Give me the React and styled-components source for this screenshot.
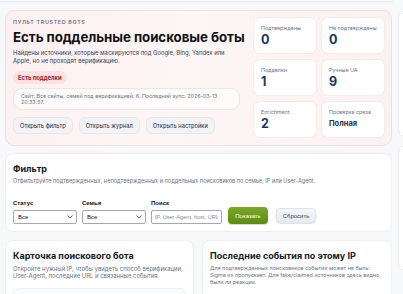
import styled, { createGlobalStyle } from "styled-components";

const GlobalStyle = createGlobalStyle`
  html, body {
    margin: 0;
    padding: 0;
    background: #f7f8fa;
    font-family: Inter, "Noto Sans", sans-serif;
    color: #111827;
    overflow: hidden;
  }
`;

const Page = styled.div`
  display: grid;
  grid-template-columns: 387px 120px;
  column-gap: 6px;
  padding: 0 0 0 5px;
  width: 520px;
`;

const PrevEdge = styled.div`
  grid-column: 1 / 3;
  height: 1px;
  margin-left: -5px;
  width: 393px;
  border-bottom: 1px solid #e9ebef;
  margin-bottom: 8px;
`;

const Main = styled.div`
  display: flex;
  flex-direction: column;
  gap: 7px;
`;

const Side = styled.div`
  display: flex;
  flex-direction: column;
  gap: 8px;
`;

const SideCard = styled.div`
  height: ${(p) => p.$h}px;
  background: #fff;
  border: 1px solid #eceef2;
  border-radius: 8px;
`;

const Hero = styled.section`
  display: grid;
  grid-template-columns: minmax(0, 1fr) 130px;
  gap: 14px;
  padding: 7px;
  height: 136px;
  box-sizing: border-box;
  border: 1px solid #f3dede;
  border-radius: 9px;
  background: linear-gradient(100deg, #fdf0f0 0%, #fdf6f5 45%, #fbf1f0 100%);
`;

const HeroLeft = styled.div`
  display: flex;
  flex-direction: column;
  padding-top: 1px;
`;

const Eyebrow = styled.div`
  font-size: 5.3px;
  line-height: 7px;
  font-weight: 600;
  letter-spacing: 0.7px;
  color: #6b7280;
  text-transform: uppercase;
`;

const HeroTitle = styled.h1`
  margin: 4px 0 0;
  font-size: 13.3px;
  font-weight: 700;
  letter-spacing: -0.05px;
  line-height: 15px;
  white-space: nowrap;
  color: #0f1115;
`;

const HeroText = styled.p`
  margin: 4px 0 0;
  font-size: 5.9px;
  line-height: 7.5px;
  color: #374151;
`;

const Badge = styled.span`
  align-self: flex-start;
  margin-top: 7px;
  padding: 3px 5px;
  border-radius: 7px;
  background: #fbe1e4;
  color: #9b1c2c;
  font-size: 5.8px;
  line-height: 7px;
  font-weight: 700;
`;

const InfoBox = styled.div`
  margin-top: 4px;
  padding: 4px 7px;
  border: 1px solid #efe3e3;
  border-radius: 9px;
  background: rgba(255, 255, 255, 0.6);
  font-size: 5.3px;
  line-height: 6px;
  color: #6b7280;
`;

const Actions = styled.div`
  display: flex;
  gap: 6px;
  margin-top: 7px;
`;

const GhostButton = styled.button`
  padding: 0 6px;
  height: 17px;
  border: 1px solid #e5e7eb;
  border-radius: 6px;
  background: #f1f3f6;
  font-family: inherit;
  font-size: 5.75px;
  color: #1f2937;
`;

const Stats = styled.div`
  display: grid;
  grid-template-columns: 1fr 1fr;
  grid-auto-rows: 35px;
  gap: 7px 6px;
`;

const Tile = styled.div`
  background: #fff;
  border-radius: 6px;
  padding: 7px 7px 0;
  box-shadow: 0 0 0 1px #f6eaea;
`;

const TileLabel = styled.div`
  font-size: 5.3px;
  line-height: 7px;
  color: #6b7280;
  white-space: nowrap;
`;

const TileValue = styled.div`
  margin-top: ${(p) => (p.$small ? 3 : 1)}px;
  font-size: ${(p) => (p.$small ? 7.5 : 12.5)}px;
  line-height: ${(p) => (p.$small ? 9 : 13)}px;
  font-weight: 700;
  color: #17365d;
`;

const Card = styled.section`
  background: #fff;
  border: 1px solid #eceef2;
  border-radius: 8px;
  padding: 9px 7px 7px;
  box-sizing: border-box;
  min-width: 0;
`;

const CardTitle = styled.h2`
  margin: 0;
  font-size: 9px;
  line-height: 11px;
  font-weight: 700;
  color: #111827;
`;

const CardText = styled.p`
  margin: 4px 0 0;
  font-size: ${(p) => p.$size || 5.6}px;
  line-height: 7px;
  color: #6b7280;
`;

const FilterRow = styled.div`
  display: flex;
  align-items: flex-end;
  gap: 5px;
  margin-top: 15px;
`;

const Field = styled.label`
  display: flex;
  flex-direction: column;
  gap: 3px;
  width: ${(p) => p.$w}px;
`;

const FieldLabel = styled.span`
  font-family: "Liberation Sans", Arial, sans-serif;
  font-size: 6px;
  line-height: 7px;
  font-weight: 700;
  color: #111;
`;

const SelectBox = styled.div`
  display: flex;
  align-items: center;
  justify-content: space-between;
  height: 12px;
  padding: 0 3px 0 4px;
  border: 1px solid #a6a8ad;
  border-radius: 2px;
  font-family: "Liberation Sans", Arial, sans-serif;
  font-size: 6px;
  color: #111;
  background: #fff;
`;

const SearchInput = styled.input`
  height: 14px;
  box-sizing: border-box;
  padding: 0 3px;
  border: 1px solid #a6a8ad;
  border-radius: 2px;
  font-family: "Liberation Sans", Arial, sans-serif;
  font-size: 5.6px;
  outline: none;
  &::placeholder {
    color: #8a8d93;
  }
`;

const PrimaryButton = styled.button`
  height: 17px;
  width: 40px;
  padding: 0;
  margin-left: 1px;
  border: none;
  border-radius: 4px;
  background: linear-gradient(#7aa82a, #5e8c10);
  color: #fff;
  font-family: "Liberation Sans", Arial, sans-serif;
  font-size: 6px;
  box-shadow: 0 1px 1px rgba(0, 0, 0, 0.15);
`;

const SecondaryButton = styled.button`
  height: 16px;
  width: 40px;
  padding: 0;
  margin-left: 3px;
  border: 1px solid #dde3ea;
  border-radius: 4px;
  background: linear-gradient(#f4f7fa, #e4eaf0);
  color: #2c4460;
  font-family: "Liberation Sans", Arial, sans-serif;
  font-size: 6px;
`;

const Columns = styled.div`
  display: grid;
  grid-template-columns: 189px 190px;
  gap: 8px;
  margin-top: 1px;
`;

const InnerBox = styled.div`
  margin-top: 9px;
  height: 20px;
  border: 1px solid #eef0f3;
  border-radius: 6px;
  background: #fafbfc;
`;

function Chevron() {
  return (
    <svg width="6" height="4" viewBox="0 0 6 4">
      <path d="M0.5 0.5 L3 3 L5.5 0.5" fill="none" stroke="#333" strokeWidth="0.8" />
    </svg>
  );
}

const stats = [
  { label: "Подтверждены", value: "0" },
  { label: "Не подтверждены", value: "0" },
  { label: "Подделки", value: "1" },
  { label: "Ручные UA", value: "9" },
  { label: "Enrichment", value: "2" },
  { label: "Проверка среза", value: "Полная", small: true },
];

export default function App() {
  return (
    <>
      <GlobalStyle />
      <Page>
        <PrevEdge />
        <Main>
          <Hero>
            <HeroLeft>
              <Eyebrow>Пульт Trusted Bots</Eyebrow>
              <HeroTitle>Есть поддельные поисковые боты</HeroTitle>
              <HeroText>
                Найдены источники, которые маскируются под Google, Bing, Yandex или
                Apple, но не проходят верификацию.
              </HeroText>
              <Badge>Есть подделки</Badge>
              <InfoBox>
                Сайт: Все сайты, семей под верификацией: 6. Последний sync: 2026-03-13
                20:33:57.
              </InfoBox>
              <Actions>
                <GhostButton>Открыть фильтр</GhostButton>
                <GhostButton>Открыть журнал</GhostButton>
                <GhostButton>Открыть настройки</GhostButton>
              </Actions>
            </HeroLeft>
            <Stats>
              {stats.map((s) => (
                <Tile key={s.label}>
                  <TileLabel>{s.label}</TileLabel>
                  <TileValue $small={s.small}>{s.value}</TileValue>
                </Tile>
              ))}
            </Stats>
          </Hero>

          <Card>
            <CardTitle>Фильтр</CardTitle>
            <CardText>
              Отфильтруйте подтвержденных, неподтвержденных и поддельных поисковиков по
              семье, IP или User-Agent.
            </CardText>
            <FilterRow>
              <Field $w={64}>
                <FieldLabel>Статус</FieldLabel>
                <SelectBox>
                  Все <Chevron />
                </SelectBox>
              </Field>
              <Field $w={64}>
                <FieldLabel>Семья</FieldLabel>
                <SelectBox>
                  Все <Chevron />
                </SelectBox>
              </Field>
              <Field $w={71}>
                <FieldLabel>Поиск</FieldLabel>
                <SearchInput placeholder="IP, User-Agent, host, URL" />
              </Field>
              <PrimaryButton>Показать</PrimaryButton>
              <SecondaryButton>Сбросить</SecondaryButton>
            </FilterRow>
          </Card>

          <Columns>
            <Card>
              <CardTitle>Карточка поискового бота</CardTitle>
              <CardText $size={5.95}>
                Откройте нужный IP, чтобы увидеть способ верификации, User-Agent,
                последние URL и связанные события.
              </CardText>
              <InnerBox />
            </Card>
            <Card>
              <CardTitle>Последние события по этому IP</CardTitle>
              <CardText $size={5.4}>
                Для подтвержденных поисковиков событий может не быть: Sigma их
                пропускает. Для fake/claimed источников здесь видно, были ли реакции.
              </CardText>
              <InnerBox />
            </Card>
          </Columns>
        </Main>
        <Side>
          <SideCard $h={125} />
          <SideCard $h={124} />
        </Side>
      </Page>
    </>
  );
}
